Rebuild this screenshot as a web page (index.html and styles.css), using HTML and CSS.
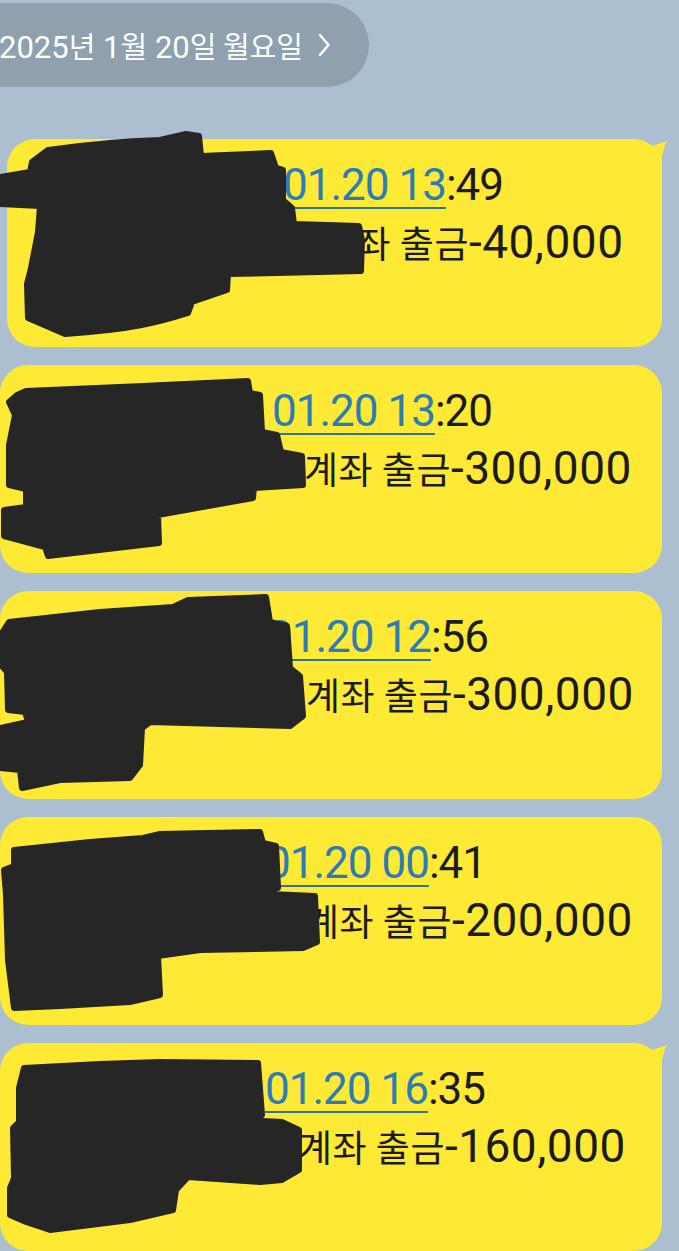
FILE: index.html
```html
<!DOCTYPE html>
<html>
<head>
	<title>채팅</title>
	<link rel="stylesheet" href="styles.css">
</head>
<body>
<div class="screen">

	<div class="date-row">
		<div class="date-pill">
			<span>2025<span class="ko">년</span> 1<span class="ko">월</span> 20<span class="ko">일 월요일</span></span>
			<svg class="chevron" viewBox="0 0 14 26"><path d="M3 3 L11.5 13 L3 23"/></svg>
		</div>
	</div>

	<div class="chat">

		<div class="bubble b1 first">
			<p class="line time"><span class="redacted r-time"></span><span class="stamp">01.20 13</span>:49</p>
			<p class="line amount"><span class="redacted r-acct"></span><span class="ko">계좌 출금</span>-40,000</p>
			<p class="line"></p>
			<svg class="scribble" viewBox="0 139 679 208">
				<path d="M48 150 C90 144 130 141 160 140 L186 134 L199 136 L201 156 L271 153 L276 168 L283 170 L283 200 L292 208 L294 224 L359 226 L362 240 L361 271 L277 273 L228 274 L227 290 L192 302 L188 313 C160 322 130 330 65 334 L28 318 L27 284 L31 268 L38 232 L40 206 L0 204 L0 177 L30 172 L32 162 Z"/>
			</svg>
		</div>

		<div class="bubble b2">
			<p class="line time"><span class="redacted r-time"></span><span class="stamp">01.20 13</span>:20</p>
			<p class="line amount"><span class="redacted r-acct"></span><span class="ko">계좌 출금</span>-300,000</p>
			<p class="line"></p>
			<svg class="scribble" viewBox="0 365 679 208">
				<path d="M17 395 L26 391 L143 386 L248 381 L250 393 L260 395 L262 432 L277 435 L281 452 L302 456 L303 485 L254 488 L253 498 L158 515 L159 543 L48 556 L45 547 L4 536 L4 510 L26 507 L26 489 L9 485 L9 445 L15 415 L9 402 Z"/>
			</svg>
		</div>

		<div class="bubble b3">
			<p class="line time"><span class="redacted r-time"></span><span class="stamp">01.20 12</span>:56</p>
			<p class="line amount"><span class="redacted r-acct"></span><span class="ko">계좌 출금</span>-300,000</p>
			<p class="line"></p>
			<svg class="scribble" viewBox="0 591 679 208">
				<path d="M9 622 L100 612 L173 607 L188 600 L266 597 L270 622 L287 626 L290 668 L300 676 L303 716 L290 726 L150 722 L142 728 L140 765 L130 778 L60 780 L22 788 L20 770 L0 768 L0 728 L28 722 L25 712 L8 710 L7 672 L0 664 L0 636 Z"/>
			</svg>
		</div>

		<div class="bubble b4">
			<p class="line time"><span class="redacted r-time"></span><span class="stamp">01.20 00</span>:41</p>
			<p class="line amount"><span class="redacted r-acct"></span><span class="ko">계좌 출금</span>-200,000</p>
			<p class="line"></p>
			<svg class="scribble" viewBox="0 817 679 208">
				<path d="M14 850 L90 842 L143 838 L160 834 L260 832 L263 843 L276 846 L278 888 L250 893 L315 896 L317 942 L303 948 L200 950 L158 956 L160 995 L130 1002 L60 1006 L14 1008 L8 960 L6 895 L4 870 L14 866 Z"/>
			</svg>
		</div>

		<div class="bubble b5 first">
			<p class="line time"><span class="redacted r-time"></span><span class="stamp">01.20 16</span>:35</p>
			<p class="line amount"><span class="redacted r-acct"></span><span class="ko">계좌 출금</span>-160,000</p>
			<p class="line"></p>
			<svg class="scribble" viewBox="0 1043 679 208">
				<path d="M24 1068 L100 1064 L160 1062 L258 1063 L262 1115 L243 1120 L282 1122 L299 1130 L299 1170 L282 1180 L260 1182 L188 1177 L176 1190 L173 1210 L130 1220 L50 1230 L26 1222 L10 1215 L10 1188 L14 1178 L13 1128 L19 1122 L19 1088 Z"/>
			</svg>
		</div>

	</div>
</div>
</body>
</html>
```

FILE: styles.css
```css
body {
	margin: 0;
	background: #abbfd1;
	font-family: Roboto, "Noto Sans CJK KR", sans-serif;
	overflow: hidden;
}

.screen {
	width: 679px;
	height: 1251px;
	overflow: hidden;
}

.ko {
	font-family: "Noto Sans CJK KR", sans-serif;
}

/* date separator */
.date-row {
	padding-top: 3px;
}
.date-pill {
	display: inline-flex;
	align-items: center;
	gap: 14px;
	height: 84px;
	margin-left: -44px;
	padding: 0 38px 0 43px;
	border-radius: 0 42px 42px 0;
	background: #8fa0af;
	color: #fff;
	font-size: 31px;
}
.date-pill .ko {
	font-size: 29px;
}
.chevron {
	width: 14px;
	height: 26px;
	fill: none;
	stroke: #fff;
	stroke-width: 2.4;
	stroke-linecap: round;
	stroke-linejoin: round;
}

/* messages */
.chat {
	display: flex;
	flex-direction: column;
	align-items: flex-end;
	gap: 18px;
	margin-top: 52px;
	padding-right: 17px;
}
.bubble {
	position: relative;
	box-sizing: border-box;
	width: 662px;
	padding: 18px 24px 19px;
	background: #fee935;
	border-radius: 28px;
	color: #1b1b1b;
	font-size: 46px;
}
.bubble.b1 {
	width: 655px;
}
.bubble.first::after {
	content: "";
	position: absolute;
	top: 0;
	right: -6px;
	width: 22px;
	height: 34px;
	background: #fee935;
	clip-path: polygon(0 8px, 5px 7px, 12px 5px, 21px 2px, 18px 9px, 16px 18px, 16px 34px, 0 34px);
}

.line {
	margin: 0;
	height: 57px;
	line-height: 57px;
	white-space: nowrap;
}
.line .ko {
	font-size: 37px;
}
.time {
	font-size: 44px;
	letter-spacing: -1px;
}
.amount {
	letter-spacing: 0.5px;
}
.stamp {
	color: #2b7cb7;
	text-decoration: underline;
	text-decoration-color: #2e7496;
	text-decoration-thickness: 2px;
	text-underline-offset: 7px;
}
.redacted {
	display: inline-block;
	height: 57px;
	vertical-align: top;
}

.b1 .r-time { width: 252px; }
.b1 .r-acct { width: 291px; }
.b2 .r-time { width: 248px; }
.b2 .r-acct { width: 280px; }
.b3 .r-time { width: 244px; }
.b3 .r-acct { width: 282px; }
.b4 .r-time { width: 242px; }
.b4 .r-acct { width: 281px; }
.b5 .r-time { width: 241px; }
.b5 .r-acct { width: 274px; }

/* marker scribble laid over the hidden part of each message */
.scribble {
	position: absolute;
	top: 0;
	right: -17px;
	width: 679px;
	height: 208px;
	overflow: visible;
	fill: #262626;
	stroke: #262626;
	stroke-width: 6;
	stroke-linejoin: round;
	pointer-events: none;
}
```
